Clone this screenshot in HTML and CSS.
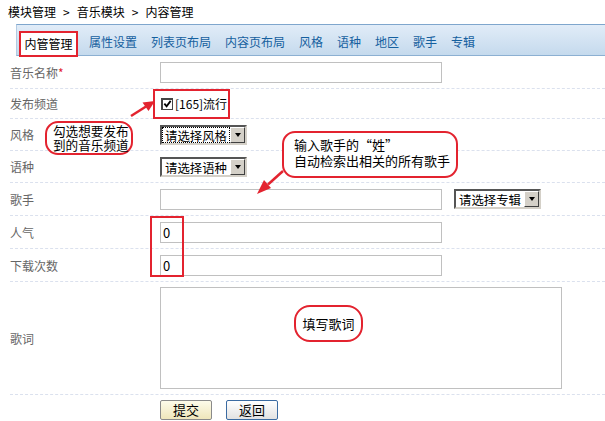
FILE: index.html
```html
<!DOCTYPE html>
<html lang="zh-CN">
<head>
    <meta charset="UTF-8">
    <meta name="viewport" content="width=device-width, initial-scale=1.0">
    <title>内容管理</title>
    <link rel="stylesheet" href="styles.css">
</head>
<body>
    <div class="page">
        <div class="crumb">模块管理<span class="sep">&gt;</span>音乐模块<span class="sep">&gt;</span>内容管理</div>

        <div class="tabs">
            <span class="tab tab-on">内管管理</span>
            <span class="tab">属性设置</span>
            <span class="tab">列表页布局</span>
            <span class="tab">内容页布局</span>
            <span class="tab">风格</span>
            <span class="tab">语种</span>
            <span class="tab">地区</span>
            <span class="tab">歌手</span>
            <span class="tab">专辑</span>
        </div>

        <form class="form">
            <div class="row row-name">
                <label class="lbl">音乐名称<em>*</em></label>
                <input class="txt" type="text">
            </div>
            <div class="row row-channel">
                <label class="lbl">发布频道</label>
                <span class="mark">
                    <span class="chk">
                        <svg width="10" height="10" viewBox="0 0 10 10"><path d="M1.5 4.5 L4 7.5 L8.5 1.5" fill="none" stroke="#000" stroke-width="2"/></svg>
                    </span>
                    <span class="chk-text">[165]流行</span>
                </span>
            </div>
            <div class="row row-style">
                <label class="lbl">风格</label>
                <span class="sel sel-focus"><span class="sel-text">请选择风格</span><span class="sel-btn"></span></span>
            </div>
            <div class="row row-lang">
                <label class="lbl">语种</label>
                <span class="sel"><span class="sel-text">请选择语种</span><span class="sel-btn"></span></span>
            </div>
            <div class="row row-singer">
                <label class="lbl">歌手</label>
                <input class="txt" type="text">
                <span class="sel sel-album"><span class="sel-text">请选择专辑</span><span class="sel-btn"></span></span>
            </div>
            <div class="row row-num">
                <label class="lbl">人气</label>
                <input class="txt" type="text" value="0">
            </div>
            <div class="row row-num">
                <label class="lbl">下载次数</label>
                <input class="txt" type="text" value="0">
            </div>
            <div class="row row-lyric">
                <label class="lbl">歌词</label>
                <textarea class="area"></textarea>
            </div>
            <div class="row-btns">
                <button type="button" class="btn btn-submit">提交</button>
                <button type="button" class="btn btn-back">返回</button>
            </div>
        </form>

        <!-- 标注 -->
        <div class="box-zero"></div>
        <div class="note note-channel">勾选想要发布<br>到的音乐频道</div>
        <div class="note note-singer">输入歌手的“姓”<br>自动检索出相关的所有歌手</div>
        <div class="note note-lyric">填写歌词</div>
        <svg class="arrows" width="605" height="421" viewBox="0 0 605 421">
            <line x1="131" y1="116" x2="146" y2="106.5" stroke="#e3232f" stroke-width="2.5"/>
            <polygon points="155,101 148.5,111 142.5,102.5" fill="#e3232f"/>
            <line x1="283" y1="171" x2="268" y2="184.5" stroke="#e3232f" stroke-width="2.5"/>
            <polygon points="257,194 271,188 264,180" fill="#e3232f"/>
        </svg>
    </div>
</body>
</html>
```

FILE: styles.css
```css
* {
    margin: 0;
    padding: 0;
    box-sizing: border-box;
}
body {
    font-family: "Noto Sans CJK SC", "Liberation Sans", sans-serif;
    font-size: 12px;
    color: #000;
    background: #fff;
}
.page {
    position: relative;
    width: 605px;
    height: 421px;
    overflow: hidden;
}
.crumb {
    height: 24px;
    line-height: 24px;
    padding-left: 8px;
}
.crumb .sep {
    margin: 0 7px;
}
.tabs {
    display: flex;
    align-items: flex-end;
    height: 32px;
    margin-left: 16px;
    border-top: 1px solid #7fa6cd;
    border-bottom: 1px solid #8cb0d2;
    border-left: 1px solid #b3cbe3;
    background: linear-gradient(#e1ecf8, #c5daed);
}
.tab {
    height: 26px;
    line-height: 26px;
    padding: 0 7px;
    color: #15609f;
    white-space: nowrap;
}
.tab-on {
    width: 59px;
    margin: 0 4px -2px 2px;
    padding: 0;
    line-height: 22px;
    text-align: center;
    color: #000;
    background: #fff;
    border: 2px solid #e3232f;
}
.form {
    margin-left: 10px;
}
.row {
    display: flex;
    align-items: center;
    border-bottom: 1px dashed #dbe1ee;
}
.row-name { height: 33px; }
.row-channel { height: 30px; }
.row-style,
.row-lang { height: 32px; }
.row-singer,
.row-num { height: 33px; }
.row-lyric { height: 113px; }
.lbl {
    width: 150px;
    flex-shrink: 0;
    color: #666;
}
.lbl em {
    font-style: normal;
    color: #e3232f;
}
.txt {
    width: 282px;
    height: 21px;
    padding: 0 2px;
    border: 1px solid #c0c0c0;
    font: 13px "Noto Sans CJK SC", "Liberation Sans", sans-serif;
    outline: none;
}
.mark {
    display: inline-flex;
    align-items: center;
    height: 30px;
    width: 77px;
    margin-left: -7px;
    padding-left: 6px;
    border: 2px solid #e3232f;
}
.chk {
    display: inline-flex;
    align-items: center;
    justify-content: center;
    width: 12px;
    height: 12px;
    border: 1px solid #444;
    border-top-width: 2px;
    border-left-width: 2px;
    background: #fff;
}
.chk-text {
    margin-left: 2px;
}
.sel {
    display: inline-flex;
    width: 87px;
    height: 20px;
    border: 2px solid;
    border-color: #555 #d4d0c8 #d4d0c8 #555;
    background: #fff;
    font-size: 12.4px;
}
.sel-text {
    flex: 1;
    padding-left: 2px;
    line-height: 16px;
    white-space: nowrap;
    border: 1px solid transparent;
}
.sel-focus .sel-text {
    border: 1px dotted #000;
}
.sel-btn {
    display: flex;
    align-items: center;
    justify-content: center;
    width: 15px;
    flex-shrink: 0;
    background: #d4d0c8;
    border: 1px solid;
    border-color: #fff #404040 #404040 #fff;
}
.sel-btn::after {
    content: "";
    border-left: 3.5px solid transparent;
    border-right: 3.5px solid transparent;
    border-top: 4px solid #000;
}
.sel-album {
    margin-left: 12px;
}
.area {
    width: 402px;
    height: 102px;
    border: 1px solid #c0c0c0;
    resize: none;
    outline: none;
}
.row-btns {
    display: flex;
    gap: 14px;
    padding: 5px 0 0 150px;
}
.btn {
    width: 52px;
    height: 20px;
    border-radius: 2px;
    font: 13px "Noto Sans CJK SC", "Liberation Sans", sans-serif;
    line-height: 16px;
    color: #000;
}
.btn-submit {
    border: 1px solid #8a8a8a;
    background: linear-gradient(#fdfbea, #efe6bb);
}
.btn-back {
    border: 1px solid #3b6ba2;
    background: linear-gradient(#ffffff, #e2e2e2);
}

/* 红框与提示气泡 */
.box-zero {
    position: absolute;
    left: 150px;
    top: 216px;
    width: 34px;
    height: 61px;
    border: 2px solid #e3232f;
}
.note {
    position: absolute;
    background: #fff;
    border: 2px solid #e3232f;
    font-size: 13px;
    color: #000;
}
.note-channel {
    left: 45px;
    top: 121px;
    width: 88px;
    height: 34px;
    padding: 1px 0 0 6px;
    font-size: 12.6px;
    line-height: 14px;
    border-radius: 13px;
}
.note-singer {
    left: 282px;
    top: 131px;
    width: 176px;
    height: 47px;
    padding: 4px 0 0 10px;
    line-height: 16px;
    border-radius: 13px;
}
.note-lyric {
    left: 294px;
    top: 305px;
    width: 69px;
    height: 37px;
    line-height: 33px;
    text-align: center;
    border-radius: 16px;
}
.arrows {
    position: absolute;
    left: 0;
    top: 0;
    pointer-events: none;
}
```
